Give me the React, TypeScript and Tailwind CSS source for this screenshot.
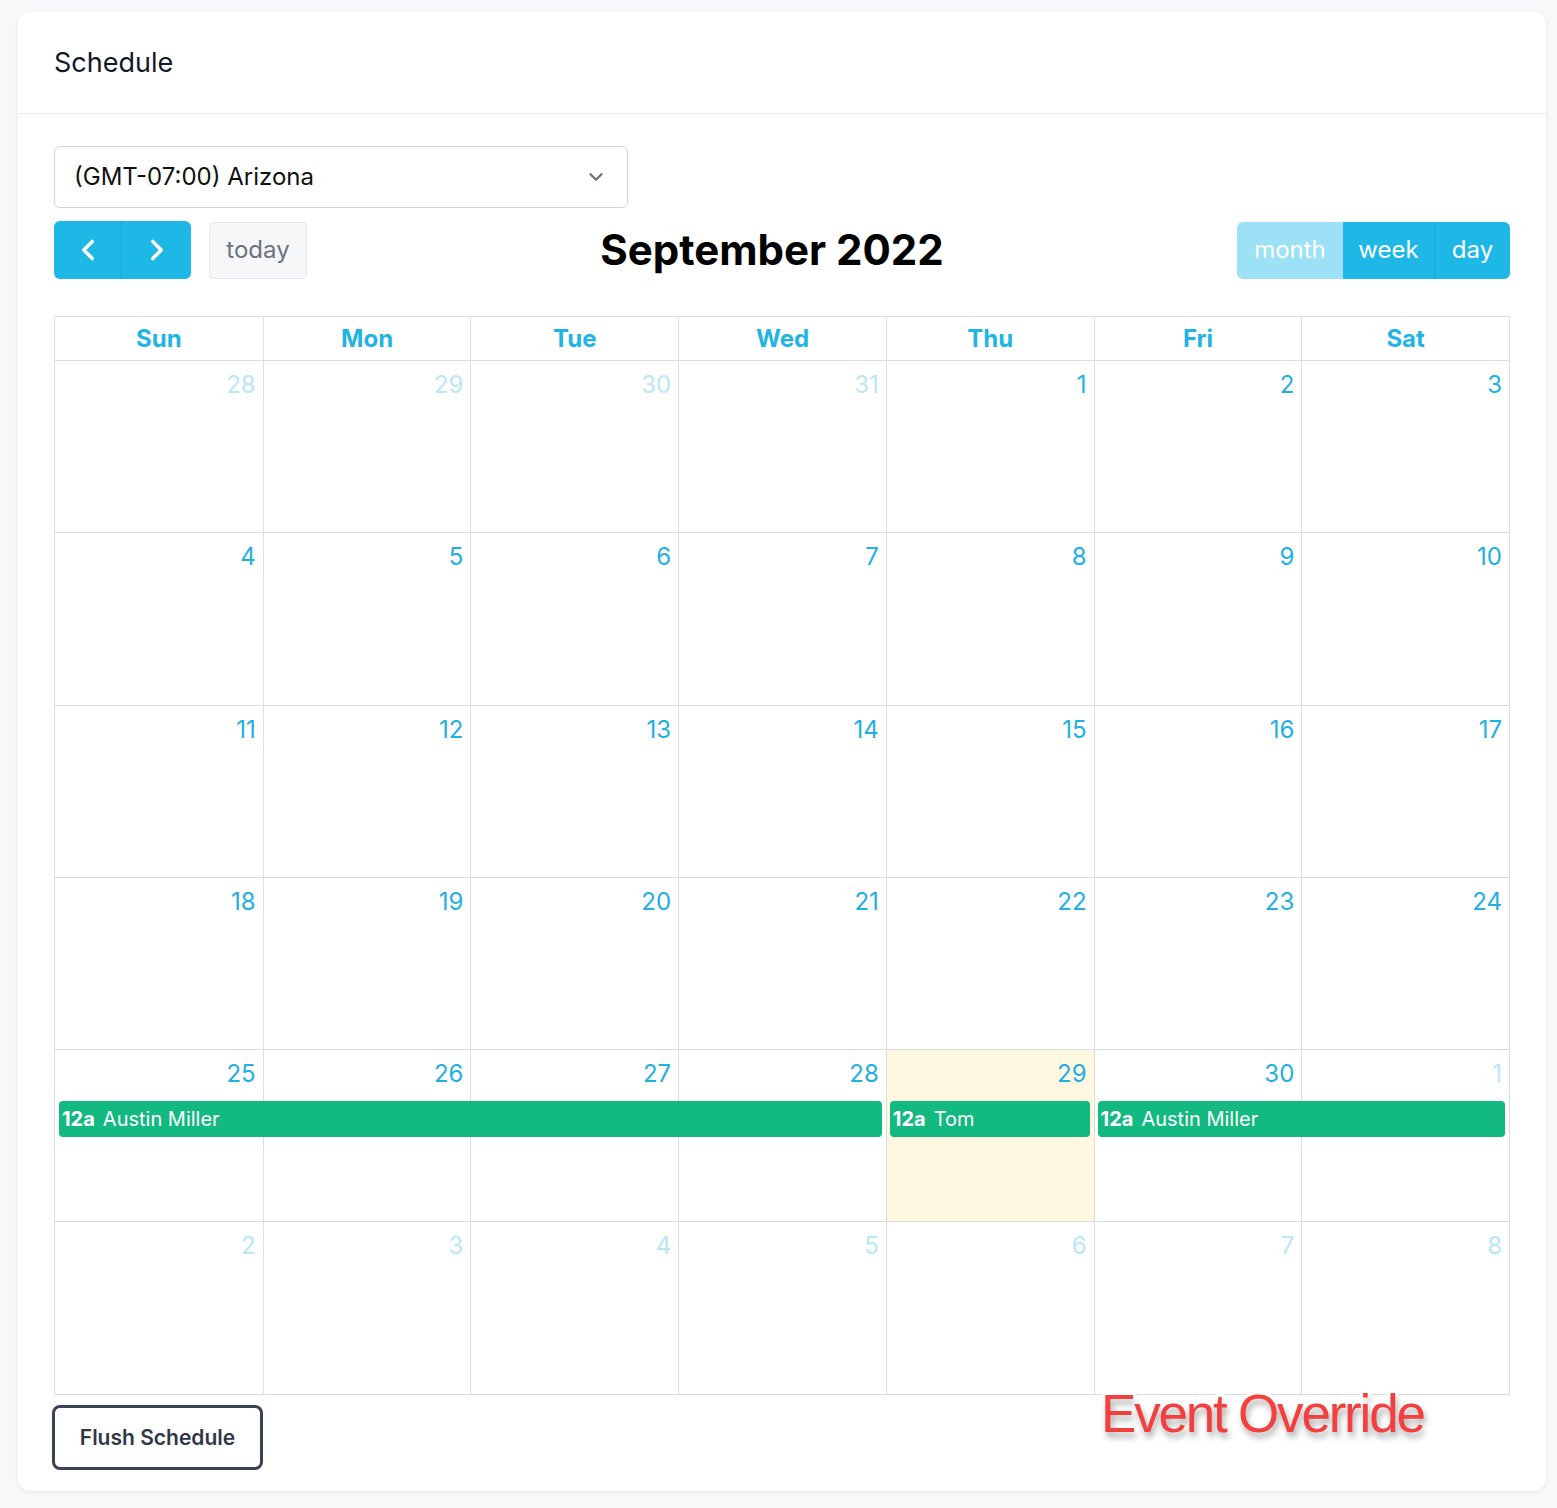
import { ChevronDown, ChevronLeft, ChevronRight } from "lucide-react";
import clsx from "clsx";

const dayNames = ["Sun", "Mon", "Tue", "Wed", "Thu", "Fri", "Sat"];

type Day = { n: number; other?: boolean; today?: boolean };
type Ev = { start: string; span: string; name: string };

const weeks: { days: Day[]; events: Ev[] }[] = [
  {
    days: [
      { n: 28, other: true },
      { n: 29, other: true },
      { n: 30, other: true },
      { n: 31, other: true },
      { n: 1 },
      { n: 2 },
      { n: 3 },
    ],
    events: [],
  },
  { days: [4, 5, 6, 7, 8, 9, 10].map((n) => ({ n })), events: [] },
  { days: [11, 12, 13, 14, 15, 16, 17].map((n) => ({ n })), events: [] },
  { days: [18, 19, 20, 21, 22, 23, 24].map((n) => ({ n })), events: [] },
  {
    days: [
      { n: 25 },
      { n: 26 },
      { n: 27 },
      { n: 28 },
      { n: 29, today: true },
      { n: 30 },
      { n: 1, other: true },
    ],
    events: [
      { start: "col-start-1", span: "col-span-4", name: "Austin Miller" },
      { start: "col-start-5", span: "col-span-1", name: "Tom" },
      { start: "col-start-6", span: "col-span-2", name: "Austin Miller" },
    ],
  },
  {
    days: [2, 3, 4, 5, 6, 7, 8].map((n) => ({ n, other: true })),
    events: [],
  },
];

const colStarts = [
  "col-start-1",
  "col-start-2",
  "col-start-3",
  "col-start-4",
  "col-start-5",
  "col-start-6",
  "col-start-7",
];

const App = () => {
  return (
    <div className="min-h-[1508px] bg-[#f7f8fa] pt-[12px] pl-[18px] pr-[11px] pb-[18px] font-['Inter',sans-serif]">
      <div className="relative rounded-[12px] bg-white shadow-[0_1px_4px_rgba(0,0,0,0.08)]">
        <header className="flex h-[102px] items-center border-b border-[#e9ebef] px-[36px]">
          <h2 className="pt-[2px] text-[27px] text-[#111827]">Schedule</h2>
        </header>

        <div className="px-[36px] pt-[32px] pb-[21px]">
          <div className="flex h-[62px] w-[574px] items-center justify-between rounded-[6px] border border-[#d1d5db] pl-[19px] pr-[20px] text-[24px] text-[#111]">
            <span>(GMT-07:00) Arizona</span>
            <ChevronDown className="h-[22px] w-[22px] text-[#6b7280]" strokeWidth={2.5} />
          </div>

          <div className="mt-[13px] flex h-[58px] items-center justify-between">
            <div className="flex items-center gap-[18px]">
              <div className="flex h-[58px] overflow-hidden rounded-[6px] bg-[#1eb8e7]">
                <button className="flex w-[68px] items-center justify-center border-r border-[#19a3cf] text-white">
                  <ChevronLeft className="h-[34px] w-[34px]" strokeWidth={2.5} />
                </button>
                <button className="flex w-[69px] items-center justify-center text-white">
                  <ChevronRight className="h-[34px] w-[34px]" strokeWidth={2.5} />
                </button>
              </div>
              <button className="h-[57px] w-[98px] rounded-[4px] border border-[#e5e7eb] bg-[#f5f6f8] text-[24px] text-[#6b7280]">
                today
              </button>
            </div>
            <h1 className="text-[42px] leading-[58px] font-bold text-black">September 2022</h1>
            <div className="flex h-[57px] overflow-hidden rounded-[6px] text-[24px] text-white">
              <button className="w-[106px] bg-[#9de1f6]">month</button>
              <button className="w-[92px] border-r border-[#19a3cf] bg-[#1eb8e7]">week</button>
              <button className="w-[75px] bg-[#1eb8e7]">day</button>
            </div>
          </div>

          <div className="mt-[37px] border border-[#dddddd]">
            <div className="grid h-[43px] grid-cols-7">
              {dayNames.map((d, i) => (
                <div
                  key={d}
                  className={clsx(
                    "flex items-center justify-center text-[24px] font-bold text-[#1eb4e4]",
                    i > 0 && "border-l border-[#dddddd]"
                  )}
                >
                  {d}
                </div>
              ))}
            </div>
            {weeks.map((w, wi) => (
              <div
                key={wi}
                className="grid h-[172.3px] grid-cols-7 grid-rows-[51px_36px_1fr] border-t border-[#dddddd]"
              >
                {w.days.map((d, di) => (
                  <div
                    key={di}
                    className={clsx(
                      "row-span-3 row-start-1 pt-[9px] pr-[7px] text-right text-[24px] leading-[30px]",
                      colStarts[di],
                      di > 0 && "border-l border-[#dddddd]",
                      d.today && "bg-[#fef8e0]",
                      d.other ? "text-[#b9e7f7]" : "text-[#22b0e2]"
                    )}
                  >
                    {d.n}
                  </div>
                ))}
                {w.events.map((e, ei) => (
                  <div
                    key={ei}
                    className={clsx(
                      "z-10 row-start-2 mx-[4px] flex items-center gap-[8px] rounded-[4px] bg-[#12b981] px-[3px] text-[20px] text-white",
                      e.start,
                      e.span
                    )}
                  >
                    <span className="font-bold">12a</span>
                    <span>{e.name}</span>
                  </div>
                ))}
              </div>
            ))}
          </div>

          <button className="ml-[-2px] mt-[10px] h-[65px] w-[211px] rounded-[8px] border-[3px] border-[#3a4356] text-[21px] font-semibold text-[#2f3747]">
            Flush Schedule
          </button>
        </div>

        <span className="absolute left-[1083px] top-[1362px] font-['Liberation_Sans',sans-serif] text-[53px] tracking-[-2.2px] text-[#f43f3f] [-webkit-text-stroke:6px_#ffffff] [paint-order:stroke_fill] [text-shadow:2px_5px_6px_rgba(0,0,0,0.35)]">
          Event Override
        </span>
      </div>
    </div>
  );
};

export default App;
